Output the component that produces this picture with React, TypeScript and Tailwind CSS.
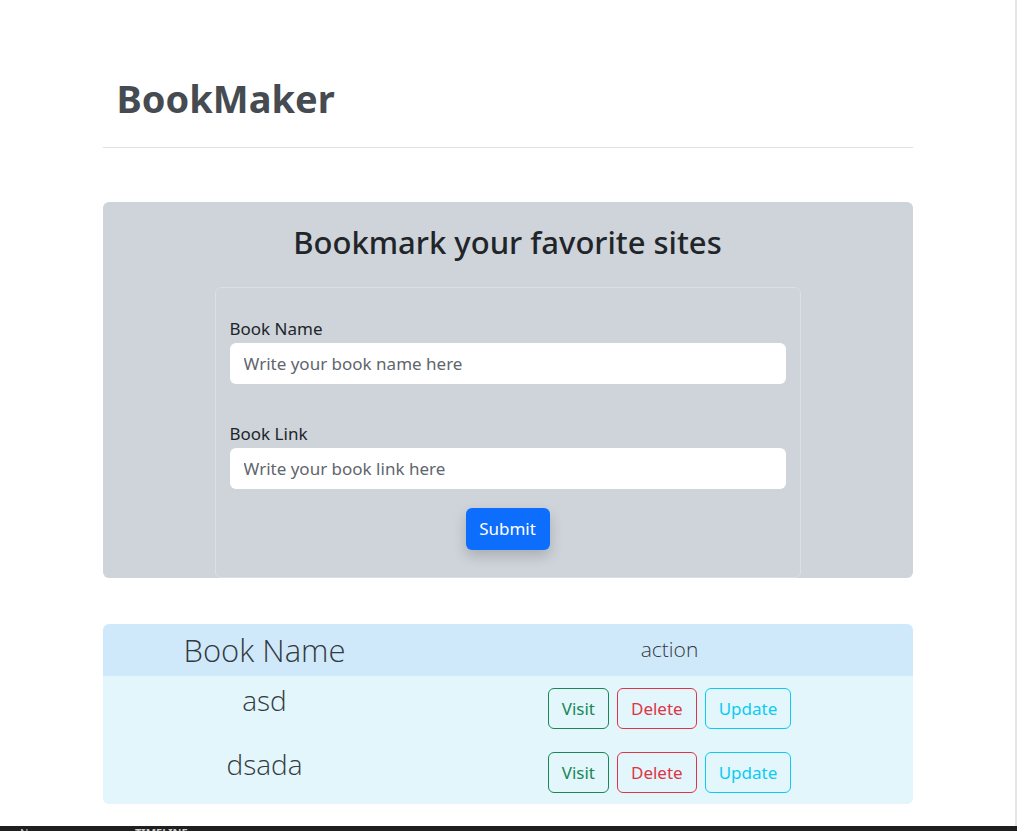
import { ReactNode } from 'react';

const books = ['asd', 'dsada'];

function OutlineBtn({ children, tone }: { children: ReactNode; tone: string }) {
  return (
    <button className={`h-[41px] rounded-md border bg-transparent px-[13px] text-[17px] leading-none ${tone}`}>
      {children}
    </button>
  );
}

export default function App() {
  return (
    <div className="relative flex h-[831px] w-full flex-col overflow-hidden bg-white font-['Noto_Sans',sans-serif] text-[#212529]">
      <div className="flex flex-1 border-r-2 border-[#e4e4e4]">
        <div className="mx-auto w-[810px]">
          {/* header */}
          <h1 className="mt-[75px] pl-[14px] text-[38px] font-bold leading-[47px] text-[#454b51]">BookMaker</h1>
          <hr className="mt-[25px] border-[#dee2e6]" />

          {/* bookmark form panel */}
          <section className="mt-[54px] flex h-[376px] flex-col items-center rounded-md bg-[#ced4da]">
            <h2 className="mt-[19px] text-[31px] font-medium leading-[42px]">Bookmark your favorite sites</h2>
            <form className="mt-[24px] flex w-[586px] flex-1 flex-col rounded-md border border-[#dbe0e5] px-[14px] pt-[28px]">
              <label className="text-[17px] leading-[25px]">Book Name</label>
              <input
                className="mt-[2px] h-[41px] rounded-md bg-white px-[14px] text-[17px] outline-none placeholder:text-[#5f666d]"
                placeholder="Write your book name here"
              />
              <label className="mt-[37px] text-[17px] leading-[25px]">Book Link</label>
              <input
                className="mt-[2px] h-[41px] rounded-md bg-white px-[14px] text-[17px] outline-none placeholder:text-[#5f666d]"
                placeholder="Write your book link here"
              />
              <button
                type="button"
                className="mx-auto mt-[19px] h-[42px] w-[84px] rounded-md bg-[#0d6efd] text-[17px] text-white shadow-[0_6px_14px_rgba(0,0,0,0.18)]"
              >
                Submit
              </button>
            </form>
          </section>

          {/* list of bookmarks */}
          <table className="mt-[46px] w-full overflow-hidden rounded-md font-['Open_Sans',sans-serif] font-light text-[#343a40]">
            <thead>
              <tr className="h-[52px] bg-[#cfe9fb]">
                <th className="w-[40%] text-[31px] font-light">Book Name</th>
                <th className="text-[21px] font-light">action</th>
              </tr>
            </thead>
            <tbody className="bg-[#e2f6fc]">
              {books.map((b) => (
                <tr key={b} className="h-[64px]">
                  <td className="pb-[16px] text-center text-[28px]">{b}</td>
                  <td>
                    <div className="flex justify-center gap-[8px] font-['Noto_Sans',sans-serif] font-normal">
                      <OutlineBtn tone="border-[#198754] text-[#198754]">Visit</OutlineBtn>
                      <OutlineBtn tone="border-[#dc3545] text-[#dc3545]">Delete</OutlineBtn>
                      <OutlineBtn tone="border-[#0dcaf0] text-[#0dcaf0]">Update</OutlineBtn>
                    </div>
                  </td>
                </tr>
              ))}
            </tbody>
          </table>
        </div>
      </div>

      {/* editor panel peeking at bottom */}
      <div className="flex h-[5px] items-start overflow-hidden bg-[#1f1f1f] text-[11px] leading-[14px] text-[#cccccc]">
        <span className="ml-[20px]">No</span>
        <span className="ml-[100px] font-bold">TIMELINE</span>
      </div>
    </div>
  );
}
